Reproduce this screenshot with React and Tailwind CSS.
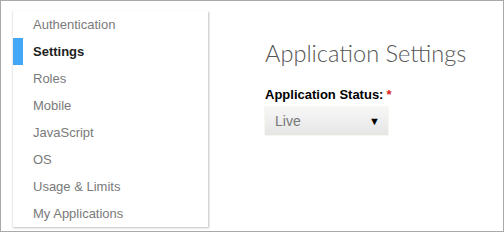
import { useState } from 'react';

const MENU = [
  'Authentication',
  'Settings',
  'Roles',
  'Mobile',
  'JavaScript',
  'OS',
  'Usage & Limits',
  'My Applications',
];

export default function App() {
  const [active, setActive] = useState('Settings');

  return (
    <div className="h-[232px] w-[504px] border border-[#a9a9a9] bg-white font-['Liberation_Sans',Arial,sans-serif] overflow-hidden">
      <div className="flex pl-[11px] pt-[10px]">
        {/* sidebar */}
        <nav className="w-[196px] border-l border-[#ececec] bg-white shadow-[1px_1px_2px_rgba(0,0,0,0.25)]">
          {MENU.map((item) => {
            const on = item === active;
            return (
              <button
                key={item}
                onClick={() => setActive(item)}
                className="flex h-[27px] w-full items-center text-left"
              >
                <span className={`h-full w-[10px] ${on ? 'bg-[#42a7f6]' : ''}`} />
                <span
                  className={`pl-[10px] text-[13px] ${
                    on ? 'font-bold text-[#222]' : 'text-[#7a7a7a]'
                  }`}
                >
                  {item}
                </span>
              </button>
            );
          })}
        </nav>

        {/* content */}
        <main className="ml-[57px] pt-[28px]">
          <h1 className="font-['Lato',sans-serif] text-[23.6px] font-light leading-[28px] text-[#555]">
            Application Settings
          </h1>
          <div className="mt-[20px] text-[13px] font-bold text-black leading-[16px]">
            Application Status:<span className="ml-[3px] text-[#e02020]">*</span>
          </div>
          <div className="mt-[4px] flex h-[28px] w-[123px] items-center justify-between bg-gradient-to-b from-[#f7f7f7] to-[#e6e6e6] pl-[10px] pr-[8px] shadow-[0_0_1px_rgba(200,200,150,0.8)]">
            <span className="text-[14px] text-[#777]">Live</span>
            <span className="text-[11px] text-black">▼</span>
          </div>
        </main>
      </div>
    </div>
  );
}
